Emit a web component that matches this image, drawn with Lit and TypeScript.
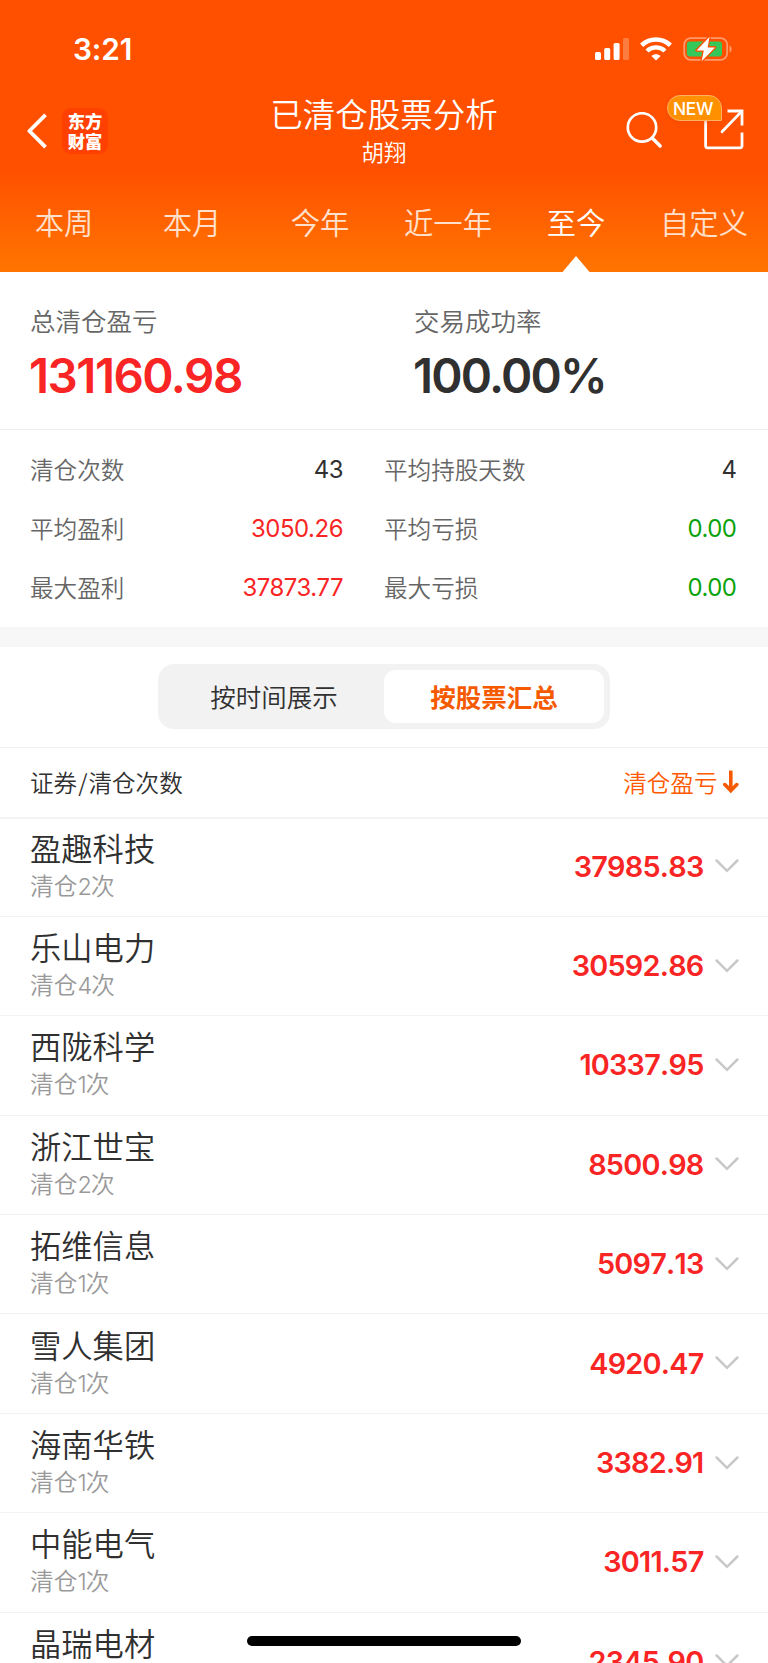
import { LitElement, html, css, svg } from "lit";
import { customElement, property, state } from "lit/decorators.js";
import { classMap } from "lit/directives/class-map.js";

interface Stat { label: string; value: string; tone: "dark" | "red" | "green"; }
interface Holding { name: string; times: number; profit: string; }

const TABS = ["本周", "本月", "今年", "近一年", "至今", "自定义"];

const STATS: Stat[] = [
  { label: "清仓次数", value: "43", tone: "dark" },
  { label: "平均持股天数", value: "4", tone: "dark" },
  { label: "平均盈利", value: "3050.26", tone: "red" },
  { label: "平均亏损", value: "0.00", tone: "green" },
  { label: "最大盈利", value: "37873.77", tone: "red" },
  { label: "最大亏损", value: "0.00", tone: "green" },
];

const HOLDINGS: Holding[] = [
  { name: "盈趣科技", times: 2, profit: "37985.83" },
  { name: "乐山电力", times: 4, profit: "30592.86" },
  { name: "西陇科学", times: 1, profit: "10337.95" },
  { name: "浙江世宝", times: 2, profit: "8500.98" },
  { name: "拓维信息", times: 1, profit: "5097.13" },
  { name: "雪人集团", times: 1, profit: "4920.47" },
  { name: "海南华铁", times: 1, profit: "3382.91" },
  { name: "中能电气", times: 1, profit: "3011.57" },
  { name: "晶瑞电材", times: 1, profit: "2345.90" },
];

const signalIcon = svg`<svg width="34" height="23" viewBox="0 0 34 23" fill="#fff">
  <rect x="0" y="14" width="6" height="8" rx="1.6"/>
  <rect x="9.2" y="10" width="6" height="12" rx="1.6"/>
  <rect x="18.6" y="5" width="6" height="17" rx="1.6"/>
  <rect x="28" y="0" width="6" height="22" rx="1.6" opacity=".25"/></svg>`;

const wifiIcon = svg`<svg width="32" height="24" viewBox="0 0 32 24" fill="none" stroke="#fff">
  <path d="M1.6 8.3C9.9 .6 22.1 .6 30.4 8.3" stroke-width="4.6"/>
  <path d="M7 14C12.2 9.2 19.8 9.2 25 14" stroke-width="4.4"/>
  <path d="M16 23.6l-4.6-4.7c2.7-2.3 6.5-2.3 9.2 0z" fill="#fff" stroke="none"/></svg>`;

const batteryIcon = svg`<svg width="50" height="26" viewBox="0 0 50 26">
  <rect x="1.2" y="2.2" width="43" height="21.6" rx="6.5" fill="none" stroke="#fff" stroke-opacity=".42" stroke-width="1.8"/>
  <path d="M46.6 9.4c2.6.9 2.6 6.3 0 7.2z" fill="#fff" opacity=".45"/>
  <rect x="3.8" y="5.4" width="35.2" height="15.2" rx="3" fill="#34c759"/>
  <path d="M26.6 .8 13.6 14.4h7.2L18.6 25.2 32 11.4h-7.4z" fill="#fff" stroke="#ff5000" stroke-width="2.6" stroke-linejoin="round" paint-order="stroke"/></svg>`;

const backIcon = svg`<svg width="20" height="36" viewBox="0 0 20 36" fill="none" stroke="#fff" stroke-width="3.8" stroke-linecap="square" stroke-linejoin="round">
  <path d="M17.2 3.2 2.4 18l14.8 14.8"/></svg>`;

const searchIcon = svg`<svg width="37" height="37" viewBox="0 0 37 37" fill="none" stroke="#fff" stroke-width="2.7" stroke-linecap="round">
  <circle cx="16" cy="15.4" r="14.2"/><path d="M26.4 26.2l7.8 7.8" stroke-width="3.4"/></svg>`;

const shareIcon = svg`<svg width="40" height="42" viewBox="0 0 40 42" fill="none" stroke="#fff" stroke-width="2.8">
  <path d="M1.6 9v27.8q0 2 2 2h32.4q2 0 2-2V23.4" />
  <path d="M23.5 2H38V16.4"/><path d="M37.4 2.6 18 22.8" stroke-linecap="round"/></svg>`;

const sortIcon = svg`<svg width="16" height="24" viewBox="0 0 16 24" fill="none" stroke="#f55a00" stroke-width="3.6">
  <path d="M7.8 .6v20"/><path d="M1.8 14.6l6 6 6-6" stroke-linecap="round" stroke-linejoin="miter"/></svg>`;

const chevronIcon = svg`<svg width="24" height="14" viewBox="0 0 24 14" fill="none" stroke="#c8c8c8" stroke-width="2.5" stroke-linecap="round">
  <path d="M1.6 1.5 12 11.8 22.4 1.5"/></svg>`;

@customElement("stock-row")
class StockRow extends LitElement {
  @property({ attribute: false }) item!: Holding;

  static styles = css`
    :host { display: flex; align-items: center; height: 99.4px; padding: 0 29px 0 30px; box-sizing: border-box; border-bottom: 1.5px solid #f3f3f3; }
    .info { flex: 1; display: flex; flex-direction: column; padding-bottom: 6px; }
    .name { font-size: 31.3px; line-height: 44px; color: #303030; }
    .times { font-size: 23.7px; line-height: 30px; color: #999; }
    .num { font-family: Inter, sans-serif; letter-spacing: -0.8px; font-size: 23.4px; }
    .profit { font: 560 28.8px/40px Inter, sans-serif; font-kerning: none; color: #f92424; letter-spacing: -0.75px; margin-right: 11.5px; }
    svg { display: block; margin-bottom: 1px; }
  `;

  render() {
    return html`
      <div class="info">
        <span class="name">${this.item.name}</span>
        <span class="times">清仓<span class="num">${this.item.times}</span>次</span>
      </div>
      <span class="profit">${this.item.profit}</span>
      ${chevronIcon}`;
  }
}

@customElement("app-root")
class AppRoot extends LitElement {
  @state() private tab = 4;
  @state() private mode = 1;

  static styles = css`
    :host { display: block; position: relative; width: 768px; height: 1663px; overflow: hidden; background: #fff; color: #303030; font-family: "Noto Sans CJK SC", sans-serif; font-weight: 350; }
    svg { display: block; }
    header { height: 272px; display: flex; flex-direction: column; color: #fff; background: linear-gradient(#ff5000 0, #ff5000 170px, #ff7500 272px); }
    .status { height: 92px; box-sizing: border-box; padding: 6px 35px 0 73px; display: flex; align-items: center; }
    .time { flex: 1; font: 600 29.8px/36px Inter, sans-serif; letter-spacing: -0.1px; }
    .status-icons { display: flex; align-items: center; gap: 11px; }
    .nav { height: 80px; display: grid; grid-template-columns: 1fr auto 1fr; }
    .left { display: flex; align-items: center; padding: 9px 0 0 27px; height: 68px; box-sizing: border-box; gap: 15px; }
    .logo { width: 46px; height: 46px; border-radius: 9px; background: #ff4000; font-size: 17.3px; line-height: 19.4px; font-weight: 800; text-align: center; display: flex; flex-direction: column; justify-content: center; }
    .titles { display: flex; flex-direction: column; align-items: center; }
    .title { font-size: 32.5px; line-height: 41px; }
    .subtitle { font-size: 22.4px; line-height: 37px; }
    .right { display: flex; justify-content: flex-end; gap: 41px; padding: 17px 24.5px 0 0; }
    .right .search { padding-top: 3px; }
    .share { position: relative; }
    .badge { position: absolute; left: -37px; top: -14px; width: 55px; height: 26px; box-sizing: border-box; border: 1px solid #ffb163; border-radius: 13px 13px 1px 13px; background: #ff9100; font: 500 17.4px/25px Inter, sans-serif; text-align: center; letter-spacing: -0.3px; padding-right: 2px; box-shadow: 0 1px 4px #e6460070; }
    .tabs { height: 100px; display: grid; grid-template-columns: repeat(6, 1fr); }
    .tab { position: relative; text-align: center; font-size: 29.3px; line-height: 98px; color: #ffe0cc; }
    .tab.on { color: #fff; }
    .tab.on::after { content: ""; position: absolute; left: 50.5px; bottom: 0; width: 27px; height: 16px; background: #fff; clip-path: polygon(50% 0, 100% 100%, 0 100%); }
    .summary { height: 158px; box-sizing: border-box; border-bottom: 1.5px solid #ececec; display: grid; grid-template-columns: 1fr 1fr; padding-top: 29px; }
    .cell { padding-left: 30px; display: flex; flex-direction: column; }
    .label { font-size: 25.5px; line-height: 37px; color: #666; }
    .big { font: 580 47.5px/60px Inter, sans-serif; margin-top: 8px; margin-left: -1px; }
    .big.sum { letter-spacing: -1.5px; }
    .big.rate { letter-spacing: -1.8px; }
    .stats { height: 197px; box-sizing: border-box; display: grid; grid-template-columns: 313px 352.5px; column-gap: 41px; grid-auto-rows: 59px; padding: 9px 0 0 30px; }
    .stat { display: flex; justify-content: space-between; align-items: center; font-size: 23.6px; color: #666; }
    .val { font: 400 23.9px/40px Inter, sans-serif; letter-spacing: -0.45px; padding-top: 2px; }
    .dark { color: #303030; } .red { color: #f92424; } .green { color: #0ba30b; }
    .band { height: 20px; background: #f7f7f7; }
    .switch { height: 101px; box-sizing: border-box; padding-top: 17px; display: flex; justify-content: center; border-bottom: 1px solid #f0f0f0; }
    .segment { width: 452px; height: 65px; box-sizing: border-box; border-radius: 16px; background: #f2f2f2; padding: 6px; display: grid; grid-template-columns: 1fr 1fr; }
    .opt { text-align: center; font-size: 25.5px; line-height: 52px; height: 53px; border-radius: 12px; }
    .opt.on { background: #fff; color: #f55a00; font-weight: 600; }
    .head { height: 70.5px; box-sizing: border-box; display: flex; align-items: center; justify-content: space-between; padding: 0 29.5px 1px 30px; font-size: 23.6px; border-bottom: 2px solid #f3f3f3; }
    .slash { margin: 0 1px; }
    .sort { display: flex; align-items: center; gap: 5px; color: #ff5a00; }
    main { margin-top: -1px; }
    .home { position: absolute; left: 247px; bottom: 17px; width: 274px; height: 10px; border-radius: 5px; background: #000; }
  `;

  render() {
    return html`
      <header>
        <div class="status">
          <span class="time">3:21</span>
          <div class="status-icons">${signalIcon}${wifiIcon}${batteryIcon}</div>
        </div>
        <div class="nav">
          <div class="left">${backIcon}<div class="logo"><span>东方</span><span>财富</span></div></div>
          <div class="titles"><span class="title">已清仓股票分析</span><span class="subtitle">胡翔</span></div>
          <div class="right">
            <div class="search">${searchIcon}</div>
            <div class="share">${shareIcon}<span class="badge">NEW</span></div>
          </div>
        </div>
        <nav class="tabs">
          ${TABS.map((t, i) => html`<span class=${classMap({ tab: true, on: i === this.tab })} @click=${() => (this.tab = i)}>${t}</span>`)}
        </nav>
      </header>
      <section class="summary">
        <div class="cell"><span class="label">总清仓盈亏</span><span class="big sum red">131160.98</span></div>
        <div class="cell"><span class="label">交易成功率</span><span class="big rate dark">100.00%</span></div>
      </section>
      <section class="stats">
        ${STATS.map((s) => html`<div class="stat"><span>${s.label}</span><span class="val ${s.tone}">${s.value}</span></div>`)}
      </section>
      <div class="band"></div>
      <div class="switch">
        <div class="segment">
          ${["按时间展示", "按股票汇总"].map((t, i) => html`<span class=${classMap({ opt: true, on: i === this.mode })} @click=${() => (this.mode = i)}>${t}</span>`)}
        </div>
      </div>
      <div class="head"><span>证券<span class="slash">/</span>清仓次数</span><span class="sort">清仓盈亏${sortIcon}</span></div>
      <main>${HOLDINGS.map((h) => html`<stock-row .item=${h}></stock-row>`)}</main>
      <div class="home"></div>`;
  }
}
